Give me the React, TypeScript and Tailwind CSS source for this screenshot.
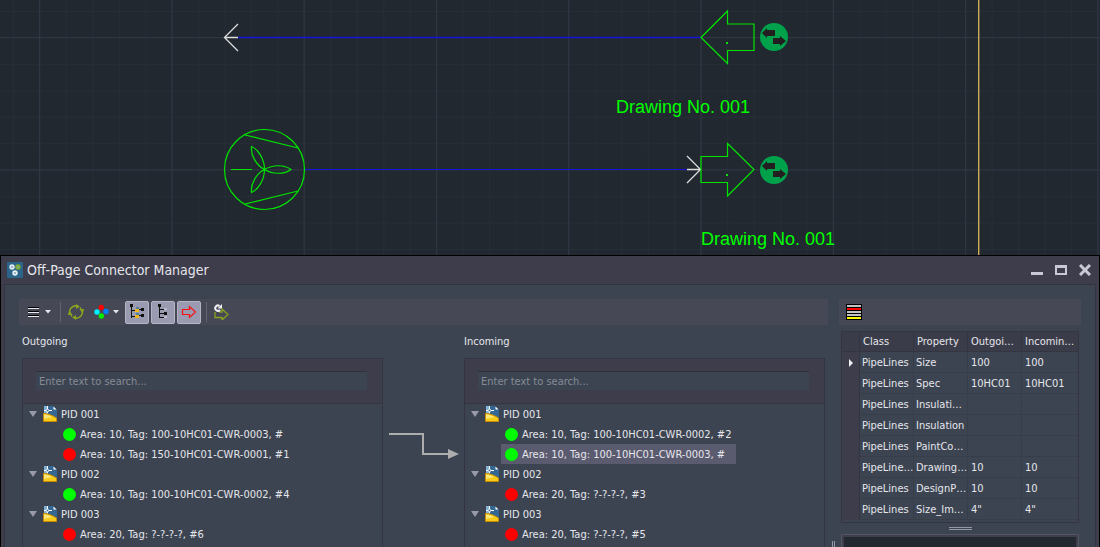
import { useState } from 'react';
import type { ReactNode } from 'react';
import clsx from 'clsx';

type Connector = { label: string; linked: boolean };
type Drawing = { name: string; connectors: Connector[] };

const outgoing: Drawing[] = [
  {
    name: 'PID 001',
    connectors: [
      { label: 'Area: 10, Tag: 100-10HC01-CWR-0003, #', linked: true },
      { label: 'Area: 10, Tag: 150-10HC01-CWR-0001, #1', linked: false },
    ],
  },
  { name: 'PID 002', connectors: [{ label: 'Area: 10, Tag: 100-10HC01-CWR-0002, #4', linked: true }] },
  { name: 'PID 003', connectors: [{ label: 'Area: 20, Tag: ?-?-?-?, #6', linked: false }] },
];

const incoming: Drawing[] = [
  {
    name: 'PID 001',
    connectors: [
      { label: 'Area: 10, Tag: 100-10HC01-CWR-0002, #2', linked: true },
      { label: 'Area: 10, Tag: 100-10HC01-CWR-0003, #', linked: true },
    ],
  },
  { name: 'PID 002', connectors: [{ label: 'Area: 20, Tag: ?-?-?-?, #3', linked: false }] },
  { name: 'PID 003', connectors: [{ label: 'Area: 20, Tag: ?-?-?-?, #5', linked: false }] },
];

const properties = [
  ['PipeLines', 'Size', '100', '100'],
  ['PipeLines', 'Spec', '10HC01', '10HC01'],
  ['PipeLines', 'Insulati…', '', ''],
  ['PipeLines', 'Insulation', '', ''],
  ['PipeLines', 'PaintCo…', '', ''],
  ['PipeLine…', 'Drawing…', '10', '10'],
  ['PipeLines', 'DesignP…', '10', '10'],
  ['PipeLines', 'Size_Im…', '4"', '4"'],
];

function LinkBadge({ x, y }: { x: number; y: number }) {
  return (
    <g transform={`translate(${x} ${y})`}>
      <circle r="14" fill="#00a14b" />
      <path d="M-12-4l5-5v2h8v6h-8v2zM12 4l-6-5v2h-7v6h7v2z" fill="#231f20" />
    </g>
  );
}

function DrawingCanvas() {
  return (
    <svg className="block h-[255px] w-full shrink-0 bg-[#21282f]" role="img" aria-label="Piping drawing">
      <defs>
        <pattern id="minor" x="13" y="11" width="26.45" height="26.45" patternUnits="userSpaceOnUse">
          <path d="M.5 0v27M0 .5h27" stroke="#262d37" fill="none" />
        </pattern>
        <pattern id="major" x="39" y="37" width="132.3" height="132.3" patternUnits="userSpaceOnUse">
          <path d="M.5 0v133M0 .5h133" stroke="#303644" fill="none" />
        </pattern>
      </defs>
      <rect width="100%" height="100%" fill="url(#minor)" />
      <rect width="100%" height="100%" fill="url(#major)" />
      <path d="M978.5 0v255" stroke="#d0ac58" />
      <path d="M979.5 0v255" stroke="#695b3c" />

      <path d="M238 37.5H701" stroke="#1414d8" strokeWidth="1.4" />
      <path d="M304 169.5H688" stroke="#1414d8" strokeWidth="1.2" />
      <g stroke="#dcdcdc" fill="none" strokeWidth="1.3">
        <path d="M238 24l-13.500 13.500 13.500 13.500M224.500 37.500H238" />
        <path d="M687 156l13.500 13.500L687 183M687 169.500h14" />
      </g>
      <g stroke="#00e400" fill="none" strokeWidth="1.200">
        <path d="M701 37.500L727.500 11v13h26.500v26.500h-26.500V63.500z" />
        <path d="M701 156.500h26.500V143.500L754 169.500l-26.500 26.500v-13.500H701z" />
        <circle cx="264.500" cy="169.500" r="40" />
        <path d="M245 135l53 13M245 204l53-13M231 169.500h21" />
        <path d="M264.500 169.500c8-5 20-5 26.500 0c-6.500 5-18.500 5-26.500 0z" />
        <path d="M264.500 169.500c-8-4-14-14-13-23c7 3 13 13 13 23z" />
        <path d="M264.500 169.500c-8 4-14 14-13 23c7-3 13-13 13-23z" />
      </g>
      <path d="M726 42h2v2h-2zM726 174h2v2h-2z" fill="#00e400" />
      <LinkBadge x={774} y={37} />
      <LinkBadge x={774} y={170} />
      <g className="font-['Liberation_Sans',sans-serif] text-[18px]" fill="#00ff00">
        <text x="616" y="113">Drawing No. 001</text>
        <text x="701" y="245">Drawing No. 001</text>
      </g>
    </svg>
  );
}

function AppIcon() {
  return (
    <svg className="size-4" viewBox="0 0 16 16">
      <rect width="16" height="16" rx="1" fill="#2b6489" />
      <circle cx="5" cy="5" r="2.700" fill="#dfeaf2" />
      <circle cx="11" cy="5" r="2.700" fill="#7fae2c" />
      <circle cx="8" cy="11" r="2.700" fill="#e8f0f5" />
      <g fill="#7fa3ba">
        <circle cx="5" cy="5" r="1" />
        <circle cx="11" cy="5" r="1" />
        <circle cx="8" cy="11" r="1" />
      </g>
    </svg>
  );
}

function DrawingFileIcon() {
  return (
    <svg className="h-4 w-3.5 shrink-0" viewBox="0 0 14 16">
      <path d="M1 0h9l4 4v12H1z" fill="#356795" />
      <path d="M1 0h4v8H1z" fill="#7fb2d6" />
      <path d="M10.500 .5v3h3z" fill="#fff" />
      <path d="M1 4.500h8M4.500 0v7" stroke="#fff" />
      <circle cx="4.500" cy="4.500" r="1.300" fill="#3c6e9f" stroke="#fff" strokeWidth=".8" />
      <path d="M.5 15.500V7.500c5 0 9 2 13 4.500v3.500z" fill="#f7cb1c" stroke="#c98a00" />
      <path d="M1 8.500c3 0 6 1 8 2.500L1 13z" fill="#fbe678" />
    </svg>
  );
}

function Caret() {
  return (
    <svg className="h-1 w-1.5" viewBox="0 0 6 4">
      <path d="M0 0h6L3 3.500z" fill="#e4e4ea" />
    </svg>
  );
}

function Toggle({ label, children }: { label: string; children: ReactNode }) {
  const [on, setOn] = useState(true);
  return (
    <button
      aria-label={label}
      aria-pressed={on}
      onClick={() => setOn(!on)}
      className={clsx(
        'flex h-[23px] w-6 items-center justify-center rounded-xs border',
        on ? 'border-[#b4b4c6] bg-[#9a9ab0]' : 'border-transparent',
      )}
    >
      <svg className="size-4" viewBox="0 0 16 16" fill="none">
        {children}
      </svg>
    </button>
  );
}

function Toolbar() {
  return (
    <div role="toolbar" aria-label="Connectors" className="flex h-[26px] items-center bg-[#474856] pl-[9px]">
      <button aria-label="Menu" className="flex items-center gap-[5px]">
        <svg className="h-3 w-3" viewBox="0 0 12 12">
          <path d="M0 1h11v1H0zM0 5h11v1H0zM0 9h11v1H0z" fill="#000" />
          <path d="M0 2h11v1H0zM0 6h11v1H0zM0 10h11v1H0z" fill="#e8e8ee" />
        </svg>
        <Caret />
      </button>
      <span className="ml-[9px] h-5 w-px bg-[#636471]" />
      <button aria-label="Refresh" className="ml-[7px]">
        <svg className="size-4" viewBox="0 0 16 16" fill="none">
          <g stroke="#88a31f" strokeWidth="1.600">
            <path d="M1.800 10A6.200 6.200 0 0 1 9.500 2.200M14.200 6A6.200 6.200 0 0 1 6.500 13.800M12 3.500l1 1.200M4 12.500l-1-1.200" />
          </g>
          <path d="M8 0l4 2.500L8 5zM16.500 5l-2.300 4L11.500 5zM8 16l-4-2.500L8 11zM-.5 11L1.800 7l2.700 4z" fill="#88a31f" />
        </svg>
      </button>
      <button aria-label="Status colours" className="ml-2.5 flex items-center gap-[3px]">
        <svg className="size-4" viewBox="0 0 16 16">
          <circle cx="7.300" cy="3.500" r="2.700" fill="#ff0000" />
          <circle cx="3" cy="8" r="2.700" fill="#00f0ff" />
          <circle cx="12" cy="7.500" r="2.700" fill="#007dff" />
          <circle cx="7.300" cy="12" r="2.700" fill="#00f000" />
        </svg>
        <Caret />
      </button>
      <div className="ml-1.5 flex gap-0.5">
        <Toggle label="Show drawings">
          <path d="M1 0h3v3H1zM12 4h3v3h-3zM12 10h3v3h-3z" fill="#111" />
          <path d="M2.500 2v12M2.500 6.500h4M2.500 12.500h4M9 5.500h4M9 11.500h4" stroke="#111" />
          <path d="M6 5h4v3H6zM6 11h4v3H6z" fill="#f3b51b" />
          <path d="M7 3h3v2H7zM7 9h3v2H7z" fill="#4f7ea8" />
        </Toggle>
        <Toggle label="Show connectors">
          <path d="M3 0h3v3H3zM9 8h3v3H9z" fill="#111" />
          <path d="M4.500 2v12M4.500 9.500H9M4.500 13.500H9M4.500 5.500H9" stroke="#111" />
          <path d="M9 4h3v2H9zM9 12h3v2H9z" fill="#bcbcca" />
        </Toggle>
        <Toggle label="Show direction">
          <path d="M1.500 5.500h7v-3l6 5.500-6 5.500v-3h-7z" stroke="#fb1010" strokeWidth="1.200" />
        </Toggle>
      </div>
      <span className="ml-[5px] h-5 w-px bg-[#636471]" />
      <button aria-label="Reconnect" className="ml-1.5">
        <svg className="size-4" viewBox="0 0 16 16" fill="none">
          <path d="M2 8v5.500h7V16l6-5.500L9 5v3H6" stroke="#88a31f" strokeWidth="1.300" />
          <path d="M6.500 2A2.700 2.700 0 1 0 7 6" stroke="#f2f2f6" strokeWidth="2" />
          <path d="M4.500 4.500H9V0z" fill="#f2f2f6" />
        </svg>
      </button>
    </div>
  );
}

type ConnectorTreeProps = { id: string; title: string; drawings: Drawing[]; selected?: string };

function ConnectorTree({ id, title, drawings, selected }: ConnectorTreeProps) {
  return (
    <section className="flex min-w-0 flex-1 flex-col">
      <label htmlFor={id} className="flex h-[33px] items-center">
        {title}
      </label>
      <div className="flex-1 border border-[#353541]">
        <div className="border-b border-[#353541] bg-[#3d3d4b] pt-3 pr-[15px] pb-[13px] pl-[13px]">
          <input
            id={id}
            type="search"
            placeholder="Enter text to search..."
            className="block h-[19px] w-full border-t border-[#31313c] bg-[#3c4451] px-[3px] placeholder:text-[#868b96]"
          />
        </div>
        <ul>
          {drawings.map((drawing) => (
            <li key={drawing.name}>
              <button className="flex h-5 items-center pl-1.5">
                <svg className="mr-1.5 h-1.5 w-2" viewBox="0 0 8 6">
                  <path d="M0 0h8L4 6z" fill="#9999a8" />
                </svg>
                <DrawingFileIcon />
                <span className="ml-1">{drawing.name}</span>
              </button>
              <ul className="pl-9">
                {drawing.connectors.map((c) => (
                  <li key={c.label}>
                    <button
                      className={clsx(
                        'flex h-5 items-center gap-1 pr-[11px] pl-1 whitespace-nowrap',
                        c.label === selected && 'bg-[#5b5b70]',
                      )}
                    >
                      <span className={clsx('size-[13px] rounded-full', c.linked ? 'bg-[#00ff00]' : 'bg-[#ff0000]')} />
                      {c.label}
                    </button>
                  </li>
                ))}
              </ul>
            </li>
          ))}
        </ul>
      </div>
    </section>
  );
}

function PropertyTable() {
  const cell = 'h-[21px] overflow-hidden border-r border-b border-[#373e4a] last:border-r-0';
  const head = 'h-5 border-r border-b border-[#353541] pl-[3px] text-left font-normal last:border-r-0';
  return (
    <div className="mx-0.5 mt-1.5 border border-[#353541] pb-0.5">
      <table className="w-full table-fixed border-separate border-spacing-0 whitespace-nowrap">
        <thead className="bg-[#3b3c49]">
          <tr>
            <th className="h-5 w-[18px] border-r border-b border-[#353541]" />
            <th className={clsx(head, 'w-[54px]')}>Class</th>
            <th className={clsx(head, 'w-[54px]')}>Property</th>
            <th className={clsx(head, 'w-[54px]')}>Outgoi…</th>
            <th className={head}>Incomin…</th>
          </tr>
        </thead>
        <tbody>
          {properties.map((row, i) => (
            <tr key={row[1]}>
              <td className="border-r border-[#353541] bg-[#3d3d4b]">
                {i === 0 && (
                  <svg className="ml-[7px] h-2 w-1" viewBox="0 0 4 8">
                    <path d="M0 0l4 4-4 4z" fill="#f0f0f4" />
                  </svg>
                )}
              </td>
              {row.map((value, j) => (
                <td key={j} className={clsx(cell, j < 2 ? 'pl-0.5' : 'pl-[3px]')}>
                  {value}
                </td>
              ))}
            </tr>
          ))}
        </tbody>
      </table>
    </div>
  );
}

function TitleBar() {
  return (
    <header className="flex h-7 shrink-0 items-center pr-2 pl-1.5">
      <AppIcon />
      <h1 className="ml-1 flex-1 text-[14px]">Off-Page Connector Manager</h1>
      <div className="flex gap-3">
        <button aria-label="Minimize">
          <svg className="size-3" viewBox="0 0 12 12">
            <path d="M0 8h12v3H0z" fill="#c9c9d6" />
          </svg>
        </button>
        <button aria-label="Maximize">
          <svg className="size-3" viewBox="0 0 12 12">
            <path d="M0 1h12v10H0zM2 4v5h8V4z" fill="#c9c9d6" fillRule="evenodd" />
          </svg>
        </button>
        <button aria-label="Close">
          <svg className="size-3" viewBox="0 0 12 12">
            <path d="M1 1l10 10M11 1L1 11" stroke="#c9c9d6" strokeWidth="3" />
          </svg>
        </button>
      </div>
    </header>
  );
}

export default function App() {
  return (
    <div className="flex h-screen flex-col overflow-hidden bg-[#21282f] font-['DejaVu_Sans_Condensed','DejaVu_Sans',sans-serif] text-[11px] leading-[17px] text-[#e6e6ec]">
      <DrawingCanvas />
      <main className="flex flex-1 flex-col border-x border-t border-black bg-[#3d3d4b]">
        <TitleBar />
        <div className="mx-[3px] flex flex-1 border-x border-t border-[#333440] bg-[#3c4451] px-3.5 pt-3.5">
          <div className="flex min-w-0 flex-1 flex-col">
            <Toolbar />
            <div className="flex flex-1 px-[3px]">
              <ConnectorTree id="outgoing-search" title="Outgoing" drawings={outgoing} />
              <svg className="mt-[100px] h-10 w-[81px] shrink-0" viewBox="0 0 81 40">
                <path d="M6 9h34v20h30" fill="none" stroke="#adadad" strokeWidth="2" />
                <path d="M65 24l11 5-11 5z" fill="#adadad" />
              </svg>
              <ConnectorTree
                id="incoming-search"
                title="Incoming"
                drawings={incoming}
                selected="Area: 10, Tag: 100-10HC01-CWR-0003, #"
              />
            </div>
          </div>
          <div className="flex w-[11px] shrink-0 justify-center pt-[242px]">
            <span className="h-6 w-[3px] border-x border-[#9697a6]" />
          </div>
          <aside className="flex w-[242px] shrink-0 flex-col">
            <div role="toolbar" aria-label="Properties" className="flex h-[26px] items-center bg-[#474856] pl-[7px]">
              <button aria-label="Show differences">
                <svg className="size-4" viewBox="0 0 16 16">
                  <path d="M0 0h16v16H0z" fill="#000" />
                  <path d="M1 1h14v2H1zM1 7h14v2H1zM1 10h14v2H1z" fill="#c3c3c3" />
                  <path d="M1 4h14v2H1z" fill="#ff0000" />
                  <path d="M1 13h14v2H1z" fill="#ffff00" />
                </svg>
              </button>
            </div>
            <PropertyTable />
            <div className="flex h-[11px] items-center justify-center">
              <span className="h-[3px] w-[23px] border-y border-[#9697a6]" />
            </div>
            <div className="mx-0.5 flex flex-1 flex-col border-x border-t border-[#555664] bg-[#3d3d4b] px-0.5 pt-0.5">
              <div className="flex-1 bg-[#21282f]" />
            </div>
          </aside>
        </div>
      </main>
    </div>
  );
}
